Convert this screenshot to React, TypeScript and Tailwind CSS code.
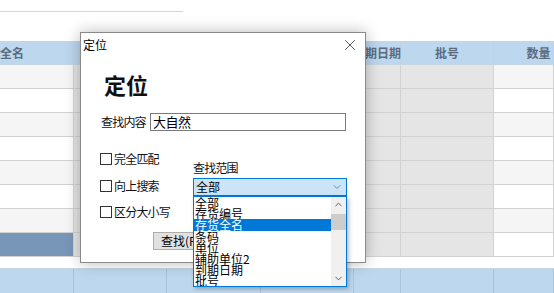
import { X, ChevronDown, ChevronUp } from "lucide-react";

const cols = ["w-[74px]", "w-[93px]", "w-[94px]", "w-[93px]", "w-[47px]", "w-[93px]", "w-[60px]"];
const scopes = ["全部", "存货编号", "存货全名", "条码", "单位", "辅助单位2", "到期日期", "批号"];
const rows = [0, 1, 2, 3, 4, 5, 6, 7];

function Check({ label }: { label: string }) {
  return (
    <label className="flex items-center gap-[2px] h-[14px]">
      <span className="w-[12px] h-[12px] border border-[#333] bg-white" />
      <span className="text-[12px] leading-[14px] tracking-[-0.8px] text-[#111]">{label}</span>
    </label>
  );
}

export default function App() {
  return (
    <div
      className="relative w-[554px] h-[293px] overflow-hidden bg-white"
      style={{ fontFamily: '"Noto Sans CJK SC", "Noto Sans", sans-serif' }}
    >
      {/* toolbar line */}
      <div className="h-[12px] w-[183px] border-b border-[#d4d4d4]" />
      <div className="h-[29px]" />

      {/* header */}
      <div className="flex h-[24px] bg-[#bdd7ee] border-b border-[#c9d6e2]">
        {cols.map((w, i) => (
          <div
            key={i}
            className={`${w} shrink-0 border-r border-[#c4d2de] flex items-center text-[12px] font-bold text-[#5b6b7e] ${
              i === 0 ? "justify-start" : i === 4 ? "justify-end" : "justify-center"
            }`}
          >
            {i === 0 && "全名"}
            {i === 4 && <span className="whitespace-nowrap -mr-[1px]">到期日期</span>}
            {i === 5 && "批号"}
            {i === 6 && <span className="pl-[30px] whitespace-nowrap">数量</span>}
          </div>
        ))}
      </div>

      {/* body */}
      {rows.map((r) => (
        <div key={r} className="flex h-[24px] border-b border-[#d2d2d2]">
          {cols.map((w, i) => {
            const sel = r === 7 && i === 0;
            const gray = i > 0 && i < 6;
            const bg = sel ? "bg-[#7896b8]" : gray ? "bg-[#e5e5e5]" : r % 2 === 0 ? "bg-[#f5f5f5]" : "bg-white";
            return <div key={i} className={`${w} shrink-0 border-r border-[#d2d2d2] ${bg}`} />;
          })}
        </div>
      ))}

      <div className="h-[11px]" />

      {/* footer */}
      <div className="flex h-[25px] bg-[#bdd7ee] border-t border-[#c9d6e2]">
        {cols.map((w, i) => (
          <div key={i} className={`${w} shrink-0 border-r border-[#a9c2d8]`} />
        ))}
      </div>

      {/* dialog */}
      <div className="absolute left-[80px] top-[32px] w-[286px] h-[231px] bg-white border border-[#8a8a8a] shadow-[0_0_14px_rgba(0,0,0,0.28)]">
        <div className="h-[23px] flex items-center justify-between pl-[2px] pr-[6px]">
          <span className="text-[12px] leading-[14px] text-black">定位</span>
          <X size={18} strokeWidth={1} className="text-[#222]" />
        </div>
        <div className="pl-[23px] pt-[16px] text-[22px] leading-[24px] font-bold text-[#111]">定位</div>
        <div className="flex items-center pl-[20px] mt-[17px] h-[18px]">
          <span className="text-[12px] w-[49px] tracking-[-0.8px] text-[#111]">查找内容</span>
          <div className="w-[196px] h-[18px] border border-[#7a7a7a] flex items-center px-[2px] text-[13px] tracking-[-0.5px] text-black">
            大自然
          </div>
        </div>
        <div className="flex mt-[21px] pl-[19px]">
          <div className="flex flex-col gap-[12.5px] w-[93px]">
            <Check label="完全匹配" />
            <Check label="向上搜索" />
            <Check label="区分大小写" />
          </div>
          <div className="flex flex-col pt-[9px]">
            <span className="text-[12px] leading-[14px] tracking-[-0.8px] text-[#111] mb-[3px]">查找范围</span>
            <div className="relative w-[154px]">
              <div className="h-[18px] bg-[#cce4f7] border border-[#0078d7] flex items-center justify-between pl-[2px] pr-[3px] text-[12px] text-black">
                全部
                <ChevronDown size={12} strokeWidth={1.3} className="text-[#555]" />
              </div>
              <div className="absolute top-full left-0 w-[154px] h-[91px] bg-white border border-[#0078d7] flex shadow-[2px_2px_4px_rgba(0,0,0,0.25)] z-10">
                <div className="flex-1 flex flex-col overflow-hidden">
                  {scopes.map((s, i) => (
                    <div
                      key={s}
                      className={`h-[11.2px] shrink-0 leading-[11px] text-[12px] pl-[1px] whitespace-nowrap ${
                        i === 2 ? "bg-[#0078d7] text-white" : "text-black"
                      }`}
                    >
                      {s}
                    </div>
                  ))}
                </div>
                <div className="w-[15px] bg-[#f0f0f0] flex flex-col items-center">
                  <ChevronUp size={11} strokeWidth={2} className="text-[#555] mt-[2px]" />
                  <div className="w-[15px] h-[16px] bg-[#cdcdcd] mt-[4px]" />
                  <div className="flex-1" />
                  <ChevronDown size={11} strokeWidth={2} className="text-[#555] mb-[2px]" />
                </div>
              </div>
            </div>
          </div>
        </div>
        <div className="pl-[72px] mt-[13px]">
          <div className="w-[75px] h-[18px] bg-[#e1e1e1] border border-[#adadad] flex items-center pl-[7px] text-[12px] text-black">
            查找(F)
          </div>
        </div>
      </div>
    </div>
  );
}
